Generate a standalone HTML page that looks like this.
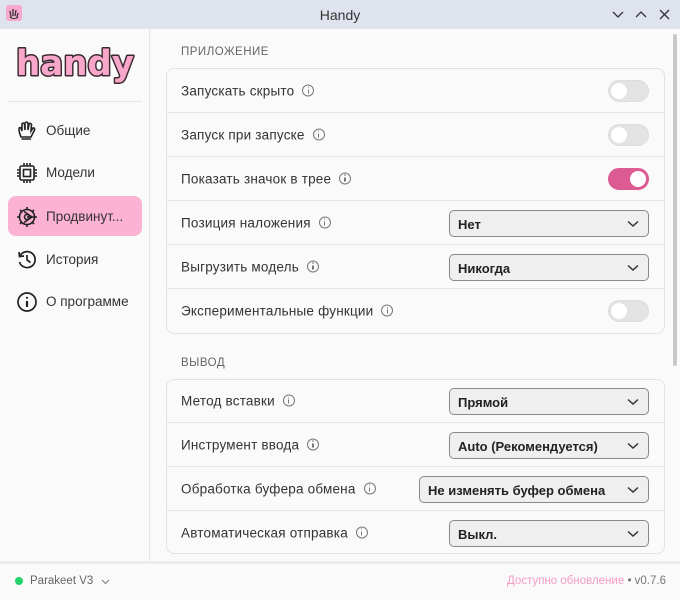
<!DOCTYPE html>
<html><head><meta charset="utf-8"><style>
*{box-sizing:border-box;margin:0;padding:0}
body{width:680px;height:600px;overflow:hidden;background:#fafafa;font-family:"Liberation Sans","Noto Sans CJK SC",sans-serif;color:#333;position:relative}
.abs{position:absolute}
.title{left:0;top:0;width:680px;height:29px;background:#dee3ed}
.side{left:0;top:29px;width:150px;height:533px;border-right:1px solid #e6e6e6;background:#fafafa}
.nav{position:absolute;left:8px;width:134px;height:40px;border-radius:8px;font-size:13.5px;color:#333}
.nav span{position:absolute;left:38px;top:13px}
.nav svg{position:absolute;left:8px;top:10px}
.sec{font-size:11.5px;color:#666;letter-spacing:.5px}
.card{left:166px;width:499px;border:1px solid #e3e3e3;border-radius:8px;background:#fafafa}
.row{position:absolute;left:0;width:497px;border-bottom:1px solid #e6e6e6;font-size:13.5px}
.row:last-child{border-bottom:none}
.row .l{position:absolute;left:14px;top:50%;transform:translateY(-50%);white-space:nowrap;letter-spacing:.2px}
.i{display:inline-block;width:12px;height:12px;border:1.2px solid #777;border-radius:50%;margin-left:8px;vertical-align:-1px;position:relative}
.i:after{content:"";position:absolute;left:4.2px;top:4px;width:1.4px;height:4px;background:#777}
.i:before{content:"";position:absolute;left:4.2px;top:1.6px;width:1.4px;height:1.4px;background:#777}
.tg{position:absolute;right:15px;top:50%;margin-top:-11px;width:41px;height:22px;border-radius:11px;background:#e3e3e3;border:1px solid #ddd}
.tg:after{content:"";position:absolute;left:2px;top:2px;width:16px;height:16px;border-radius:50%;background:#fff}
.tg.on{background:#dc5b93;border-color:#dc5b93}
.tg.on:after{left:21px}
.sel{position:absolute;right:15px;top:50%;margin-top:-13px;width:200px;height:27px;border:1px solid #888;border-radius:5px;background:#efefef;font-weight:bold;font-size:13px;color:#222}
.sel b{position:absolute;left:8px;top:6px}
.sel svg{position:absolute;right:9px;top:9px}
</style></head><body>
<div class="abs title">
 <div class="abs" style="left:6px;top:5px;width:16px;height:16px;background:#f7a8cc;border-radius:3px"><svg width="16" height="16" viewBox="0 0 16 16"><path d="M5 12 L4 6 M7 11 L7 4 M9 11 L10 5 M11 12 L12 8 M4 12 Q8 15 12 12" stroke="#333" stroke-width="1.3" fill="#fff"/></svg></div>
 <div class="abs" style="left:0;width:680px;top:7px;text-align:center;font-size:14px;color:#333">Handy</div>
 <svg class="abs" style="left:611px;top:9px" width="66" height="12" viewBox="0 0 66 12"><path d="M2 3 L7 8 L12 3 M25 8 L30 3 L35 8 M49 1 L58 10 M58 1 L49 10" stroke="#333" stroke-width="1.3" fill="none"/></svg>
</div>
<div class="abs side">
 <div class="abs" style="left:14px;top:12px;width:122px;height:46px;overflow:visible">
  <svg width="124" height="48" viewBox="0 0 124 48"><text x="2" y="34" font-family="DejaVu Sans" font-weight="bold" font-size="35" textLength="118" lengthAdjust="spacingAndGlyphs" fill="#f9a6cb" stroke="#3a2a30" stroke-width="3" stroke-linejoin="round" paint-order="stroke">handy</text></svg>
 </div>
 <div class="abs" style="left:8px;top:72px;width:134px;height:1px;background:#e5e5e5"></div>
 <div class="nav" style="top:81px"><svg width="22" height="22" viewBox="0 0 22 22" fill="none" stroke="#222" stroke-width="1.6"><path d="M5 17 Q3 12 3 9 Q3 7 5 8 L6 11 L6 4 Q7 2 8.5 4 L9 10 L9 3 Q10.5 1 12 3 L12 10 L13 4 Q14.5 2.5 15.5 4.5 L15 11 L17 8 Q19 7.5 18.5 10 Q16 15 15 17 Z M5.5 19 L15 19"/></svg><span>Общие</span></div>
 <div class="nav" style="top:123px"><svg width="22" height="22" viewBox="0 0 22 22" fill="none" stroke="#222" stroke-width="1.6"><rect x="4" y="4" width="14" height="14" rx="1.5"/><rect x="7.5" y="7.5" width="7" height="7"/><path d="M8 1v3M11 1v3M14 1v3M8 18v3M11 18v3M14 18v3M1 8h3M1 11h3M1 14h3M18 8h3M18 11h3M18 14h3"/></svg><span>Модели</span></div>
 <div class="nav" style="top:167px;background:#fbb2d3"><svg width="22" height="22" viewBox="0 0 22 22" fill="none" stroke="#222" stroke-width="1.6"><circle cx="11" cy="11" r="7.5"/><path d="M11 1v3M11 18v3M1 11h3M18 11h3M4 4l2 2M16 16l2 2M4 18l2-2M16 6l2-2M8 5.5 L16 11 L8 16.5 M11 11 L18 11"/><circle cx="11" cy="11" r="2.5"/></svg><span>Продвинут...</span></div>
 <div class="nav" style="top:210px"><svg width="22" height="22" viewBox="0 0 22 22" fill="none" stroke="#222" stroke-width="1.7"><path d="M4 7 A8 8 0 1 1 3.5 13 M3 3 L3.5 7.5 L8 7 M11 6 L11 11 L14.5 13.5"/></svg><span>История</span></div>
 <div class="nav" style="top:252px"><svg width="22" height="22" viewBox="0 0 22 22" fill="none" stroke="#222" stroke-width="1.7"><circle cx="11" cy="11" r="9"/><path d="M11 10 L11 16" stroke-width="2.2"/><circle cx="11" cy="6.8" r="1.1" fill="#222" stroke="none"/></svg><span>О программе</span></div>
</div>
<div class="abs" style="left:673px;top:34px;width:4px;height:332px;background:#c8c8c8;border-radius:2px"></div>
<div class="abs sec" style="left:181px;top:46px">ПРИЛОЖЕНИЕ</div>
<div class="abs card" style="top:68px;height:266px">
 <div class="row" style="top:0;height:44px"><div class="l">Запускать скрыто<i class="i"></i></div><div class="tg"></div></div>
 <div class="row" style="top:44px;height:44px"><div class="l">Запуск при запуске<i class="i"></i></div><div class="tg"></div></div>
 <div class="row" style="top:88px;height:44px"><div class="l">Показать значок в трее<i class="i"></i></div><div class="tg on"></div></div>
 <div class="row" style="top:132px;height:44px"><div class="l">Позиция наложения<i class="i"></i></div><div class="sel"><b>Нет</b><svg width="12" height="8" viewBox="0 0 12 8"><path d="M1 1.5 L6 6 L11 1.5" stroke="#333" stroke-width="1.5" fill="none"/></svg></div></div>
 <div class="row" style="top:176px;height:44px"><div class="l">Выгрузить модель<i class="i"></i></div><div class="sel"><b>Никогда</b><svg width="12" height="8" viewBox="0 0 12 8"><path d="M1 1.5 L6 6 L11 1.5" stroke="#333" stroke-width="1.5" fill="none"/></svg></div></div>
 <div class="row" style="top:220px;height:44px;border-bottom:none"><div class="l">Экспериментальные функции<i class="i"></i></div><div class="tg"></div></div>
</div>
<div class="abs sec" style="left:181px;top:357px">ВЫВОД</div>
<div class="abs card" style="top:379px;height:175px">
 <div class="row" style="top:0;height:43px"><div class="l">Метод вставки<i class="i"></i></div><div class="sel"><b>Прямой</b><svg width="12" height="8" viewBox="0 0 12 8"><path d="M1 1.5 L6 6 L11 1.5" stroke="#333" stroke-width="1.5" fill="none"/></svg></div></div>
 <div class="row" style="top:43px;height:44px"><div class="l">Инструмент ввода<i class="i"></i></div><div class="sel"><b>Auto (Рекомендуется)</b><svg width="12" height="8" viewBox="0 0 12 8"><path d="M1 1.5 L6 6 L11 1.5" stroke="#333" stroke-width="1.5" fill="none"/></svg></div></div>
 <div class="row" style="top:87px;height:44px"><div class="l">Обработка буфера обмена<i class="i"></i></div><div class="sel" style="width:230px"><b>Не изменять буфер обмена</b><svg width="12" height="8" viewBox="0 0 12 8"><path d="M1 1.5 L6 6 L11 1.5" stroke="#333" stroke-width="1.5" fill="none"/></svg></div></div>
 <div class="row" style="top:131px;height:43px;border-bottom:none"><div class="l">Автоматическая отправка<i class="i"></i></div><div class="sel"><b>Выкл.</b><svg width="12" height="8" viewBox="0 0 12 8"><path d="M1 1.5 L6 6 L11 1.5" stroke="#333" stroke-width="1.5" fill="none"/></svg></div></div>
</div>
<div class="abs" style="left:0;top:561px;width:680px;height:3px;background:#ececec"></div>
<div class="abs" style="left:15px;top:577px;width:8px;height:8px;border-radius:50%;background:#22d46a"></div>
<div class="abs" style="left:30px;top:575px;font-size:11.5px;color:#666">Parakeet V3</div>
<svg class="abs" style="left:101px;top:579px" width="9" height="6" viewBox="0 0 9 6"><path d="M1 1 L4.5 4.5 L8 1" stroke="#777" stroke-width="1" fill="none"/></svg>
<div class="abs" style="right:14px;top:575px;font-size:11.5px;color:#777;white-space:nowrap"><span style="color:#f59bc4">Доступно обновление</span> • v0.7.6</div>
</body></html>
